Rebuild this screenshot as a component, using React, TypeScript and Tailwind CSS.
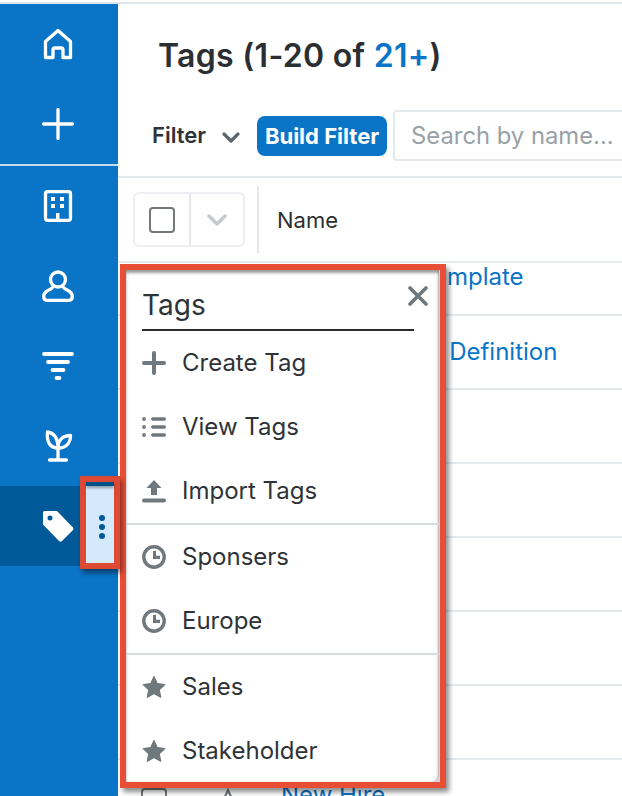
import React from "react";

const white = { fill: "none", stroke: "#fff", strokeWidth: 3.3, strokeLinecap: "round" as const, strokeLinejoin: "round" as const };

function NavItem({ children, active }: { children: React.ReactNode; active?: boolean }) {
  return (
    <div className={`h-20 flex items-center justify-center pr-0.5 ${active ? "bg-[#005a9a]" : ""}`}>
      <div className="w-8 h-8 flex items-center justify-center">{children}</div>
    </div>
  );
}

function Sidebar() {
  return (
    <aside className="w-[118px] shrink-0 bg-[#0a75c7] flex flex-col">
      <NavItem>
        <svg width="32" height="32" viewBox="0 0 32 32" {...white}>
          <path d="M16 2.5 L28.5 13.5 V29.5 H21 V22 Q21 20 19 20 H13 Q11 20 11 22 V29.5 H3.5 V13.5 Z" />
        </svg>
      </NavItem>
      <NavItem>
        <svg width="32" height="32" viewBox="0 0 32 32" {...white}>
          <path d="M16 1.5 V30.5 M1.5 16 H30.5" />
        </svg>
      </NavItem>
      <div className="h-0.5 bg-[#c5dcf0]" />
      <NavItem>
        <svg width="32" height="32" viewBox="0 0 32 32">
          <rect x="3.5" y="1.7" width="25" height="28.6" rx="2" fill="none" stroke="#fff" strokeWidth="3.3" />
          <path d="M9 7h4v4H9zM18 7h4v4h-4zM9 14h4v4H9zM18 14h4v4h-4zM14 23h3.5v7H14z" fill="#fff" />
        </svg>
      </NavItem>
      <NavItem>
        <svg width="32" height="32" viewBox="0 0 32 32" {...white}>
          <circle cx="16" cy="9.5" r="7.5" />
          <path d="M10.5 17.5 C8 20.5 2 20.5 1.7 26 Q1.7 30.3 5 30.3 H27 Q30.3 30.3 30.3 26 C30 20.5 24 20.5 21.5 17.5" />
        </svg>
      </NavItem>
      <NavItem>
        <svg width="32" height="32" viewBox="0 0 32 32" fill="none" stroke="#fff" strokeWidth="3.8" strokeLinecap="round">
          <path d="M2 4 H30 M6 12 H26 M10.5 20 H21.5 M14.5 28 H17.5" />
        </svg>
      </NavItem>
      <NavItem>
        <svg width="32" height="32" viewBox="0 0 32 32" {...white}>
          <path d="M16 18 V30 M7.5 30 H24.5" />
          <path d="M16 18 C8 18 4.5 12 5.5 2 C11.5 3 16 8 16 18 Z" />
          <path d="M16 18 C24 18 28.5 13 28.5 5.5 C21 5.5 16 10 16 18 Z" />
        </svg>
      </NavItem>
      <NavItem active>
        <svg width="32" height="32" viewBox="0 0 32 32">
          <path d="M2.5 1 H15 L31 17.5 Q32 19 31 20 L20 31 Q18.5 32 17 31 L1 14.5 V2.5 Q1 1 2.5 1 Z M8 5.5 A2.5 2.5 0 1 0 8 10.5 A2.5 2.5 0 1 0 8 5.5 Z" fill="#fff" fillRule="evenodd" />
        </svg>
      </NavItem>
    </aside>
  );
}

function TableRow({ h, text, indent, top }: { h: string; text?: string; indent?: string; top?: boolean }) {
  return (
    <div className={`${h} shrink-0 border-b-2 border-[#e6eaee] flex ${top ? "items-start" : "items-center"}`}>
      {text && <span className={`${indent} text-[#0a75c7] text-[24px] leading-7 whitespace-nowrap`}>{text}</span>}
    </div>
  );
}

function Main() {
  return (
    <main className="flex-1 min-w-0 flex flex-col bg-white overflow-hidden">
      <h1 className="h-[111px] shrink-0 pl-10 pt-[30px] text-[32px] tracking-[0.3px] leading-[44px] font-semibold text-[#2b2f33] whitespace-nowrap">
        Tags (1-20 of <span className="text-[#0a75c7]">21+</span>)
      </h1>
      <div className="h-[61px] shrink-0 flex items-start pl-[34px] border-b-2 border-[#e4e9ed] box-content">
        <span className="mt-[6px] text-[22px] leading-7 font-semibold text-[#2e3338]">Filter</span>
        <svg className="ml-[15px] mt-4 shrink-0" width="20" height="13" viewBox="0 0 20 13" fill="none" stroke="#5f676c" strokeWidth="3.2" strokeLinecap="round" strokeLinejoin="round">
          <path d="M3 3 L10 10 L17 3" />
        </svg>
        <button className="ml-[16px] mt-px h-10 w-[130px] shrink-0 rounded-lg bg-[#0a75c7] text-white text-[22px] font-bold whitespace-nowrap">
          Build Filter
        </button>
        <div className="ml-[6px] -mt-[5px] h-[51px] flex-1 min-w-[300px] rounded-l border-2 border-[#e4e9ed] pl-4 flex items-center text-[23.8px] text-[#9aa1a6] whitespace-nowrap">
          Search by name...
        </div>
      </div>
      <div className="h-[85px] shrink-0 flex items-center border-b-2 border-[#e6eaee] pl-[15px]">
        <div className="w-28 h-[55px] rounded-md border-2 border-[#eceef1] flex">
          <div className="w-[56px] border-r-2 border-[#e4e7ea] flex items-center justify-center">
            <div className="w-[26px] h-[26px] rounded border-2 border-[#75797d]" />
          </div>
          <div className="flex-1 flex items-center justify-center">
            <svg width="22" height="14" viewBox="0 0 22 14" fill="none" stroke="#c6c9cc" strokeWidth="3.5" strokeLinecap="round" strokeLinejoin="round">
              <path d="M3 3 L11 11 L19 3" />
            </svg>
          </div>
        </div>
        <div className="ml-3 w-0.5 h-[67px] bg-[#e4e9ed]" />
        <span className="ml-[18px] mt-0.5 text-[22px] text-[#2b2f33]">Name</span>
      </div>
      <TableRow h="h-[53px]" text="Email Template" indent="ml-[234px]" top />
      <TableRow h="h-[74px]" text="Process Definition" indent="ml-[233px]" />
      <TableRow h="h-[74px]" />
      <TableRow h="h-[74px]" />
      <TableRow h="h-[74px]" />
      <TableRow h="h-[74px]" />
      <TableRow h="h-[74px]" />
      <div className="h-10 shrink-0 flex items-start pl-[23px] pt-[28px]">
        <div className="w-[26px] h-6 rounded border-2 border-[#75797d] shrink-0" />
        <svg className="ml-[48px] shrink-0" width="26" height="26" viewBox="0 0 24 24" fill="none" stroke="#75797d" strokeWidth="2">
          <path d="M12 2 L15 8.5 L22 9.5 L17 14.5 L18.2 21.5 L12 18 L5.8 21.5 L7 14.5 L2 9.5 L9 8.5 Z" />
        </svg>
        <span className="ml-10 -mt-[7px] text-[#0a75c7] text-[24px] leading-7 whitespace-nowrap">New Hire</span>
      </div>
    </main>
  );
}

function MenuRow({ icon, label }: { icon: React.ReactNode; label: string }) {
  return (
    <div className="h-16 flex items-center pl-[16px]">
      <div className="w-6 h-6 flex items-center justify-center">{icon}</div>
      <span className="ml-4 text-[24px] leading-7 text-[#2e3338]">{label}</span>
    </div>
  );
}

const G = "#6f787c";
const Clock = (
  <svg width="24" height="24" viewBox="0 0 24 24">
    <circle cx="12" cy="12" r="10.2" fill="none" stroke={G} strokeWidth="3.4" />
    <path d="M11 6h3v4.8H18V14h-7z" fill={G} />
  </svg>
);
const Star = (
  <svg width="24" height="24" viewBox="0 0 24 24">
    <path d="M12 1.5 L15.2 8.5 L22.8 9.5 L17.2 14.7 L18.7 22.2 L12 18.5 L5.3 22.2 L6.8 14.7 L1.2 9.5 L8.8 8.5 Z" fill={G} stroke={G} strokeWidth="1.2" strokeLinejoin="round" />
  </svg>
);

function Popover() {
  return (
    <div className="absolute left-[120px] top-[264px] w-[326px] h-[524px] border-[6px] border-[#e74e35] shadow-[3px_4px_5px_rgba(0,0,0,0.45)] bg-[#d4d4d4]">
      <div className="h-full w-[313px] bg-white rounded-br-lg shadow-[inset_0_3px_3px_rgba(80,80,80,0.55),inset_-1px_0_2px_rgba(80,80,80,0.3)] relative">
        <div className="ml-[16px] w-[272px] h-[61px] border-b-2 border-[#2b2b2b] pt-[17px] text-[28px] leading-9 text-[#2e3338]">Tags</div>
        <svg className="absolute right-[11px] top-4" width="20" height="20" viewBox="0 0 20 20" fill="none" stroke={G} strokeWidth="3.6" strokeLinecap="round">
          <path d="M2 2 L18 18 M18 2 L2 18" />
        </svg>
        <MenuRow
          label="Create Tag"
          icon={
            <svg width="24" height="24" viewBox="0 0 24 24" fill="none" stroke={G} strokeWidth="4" strokeLinecap="round">
              <path d="M12 2 V22 M2 12 H22" />
            </svg>
          }
        />
        <MenuRow
          label="View Tags"
          icon={
            <svg width="24" height="24" viewBox="0 0 24 24" fill={G}>
              <circle cx="2" cy="4" r="1.9" />
              <circle cx="2" cy="12" r="1.9" />
              <circle cx="2" cy="20" r="1.9" />
              <rect x="9" y="2.2" width="15" height="3.6" rx="1.8" />
              <rect x="9" y="10.2" width="15" height="3.6" rx="1.8" />
              <rect x="9" y="18.2" width="15" height="3.6" rx="1.8" />
            </svg>
          }
        />
        <MenuRow
          label="Import Tags"
          icon={
            <svg width="24" height="24" viewBox="0 0 24 24" fill={G}>
              <path d="M12 1 L19.5 9 H15 V16 H9 V9 H4.5 Z" />
              <rect x="0" y="19.5" width="24" height="4" rx="2" />
            </svg>
          }
        />
        <div className="h-0.5 bg-[#d8dcdf]" />
        <MenuRow label="Sponsers" icon={Clock} />
        <MenuRow label="Europe" icon={Clock} />
        <div className="h-0.5 bg-[#d8dcdf]" />
        <MenuRow label="Sales" icon={Star} />
        <MenuRow label="Stakeholder" icon={Star} />
      </div>
    </div>
  );
}

function DotsHandle() {
  return (
    <div className="absolute left-20 top-[476px] w-10 h-[93px] border-[6px] border-[#dc4a33] shadow-[2px_4px_5px_rgba(0,0,0,0.45)] bg-[#d5e9fc]">
      <div className="h-1 bg-[#00508c] shadow-[0_2px_3px_rgba(0,0,0,0.35)]" />
      <div className="flex flex-col items-center gap-[3px] pt-[29px] pl-1">
        <span className="w-1.5 h-1.5 rounded-full bg-[#00589a]" />
        <span className="w-1.5 h-1.5 rounded-full bg-[#00589a]" />
        <span className="w-1.5 h-1.5 rounded-full bg-[#00589a]" />
      </div>
    </div>
  );
}

export default function App() {
  return (
    <div className="relative w-[622px] h-[796px] overflow-hidden bg-white" style={{ fontFamily: "Inter, 'Noto Sans', sans-serif" }}>
      <div className="h-0.5" />
      <div className="h-0.5 bg-[#dfe6ec]" />
      <div className="flex h-[792px]">
        <Sidebar />
        <Main />
      </div>
      <Popover />
      <DotsHandle />
    </div>
  );
}
